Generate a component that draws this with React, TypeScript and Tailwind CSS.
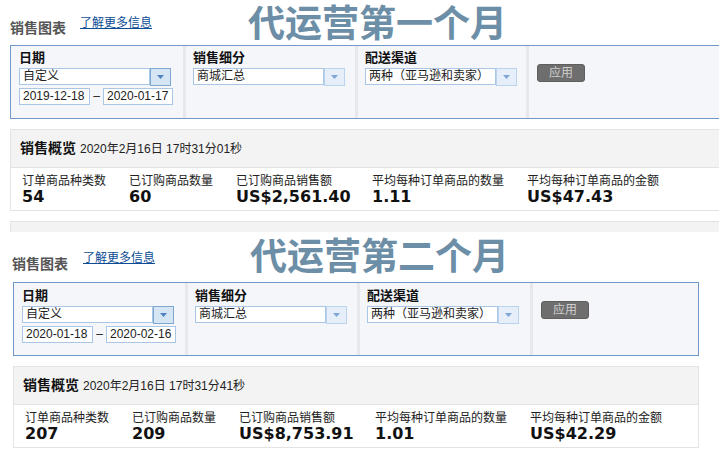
const sections = [
  {
    title: "代运营第一个月",
    from: "2019-12-18",
    to: "2020-01-17",
    time: "2020年2月16日 17时31分01秒",
    metrics: ["54", "60", "US$2,561.40", "1.11", "US$47.43"],
    wrap: "ml-[10px] w-[715px]",
    head: "h-[45px] pl-[10px]",
    headText: "mt-[21px] w-[70px]",
    link: "mt-[17px] w-[168px]",
    titleCls: "mt-[6px]",
    cols: ["w-[175px]", "w-[172px]", "w-[171px]"],
    colPad: "pt-[5px]",
    strip: true,
  },
  {
    title: "代运营第二个月",
    from: "2020-01-18",
    to: "2020-02-16",
    time: "2020年2月16日 17时31分41秒",
    metrics: ["207", "209", "US$8,753.91", "1.01", "US$42.29"],
    wrap: "ml-[13px] w-[686px]",
    head: "h-[50px] pl-[12px]",
    headText: "mt-[25px] w-[71px]",
    link: "mt-[20px] w-[167px]",
    titleCls: "mt-[7px]",
    cols: ["w-[174px]", "w-[172px]", "w-[173px]"],
    colPad: "pt-[6px]",
    strip: false,
  },
];

const labels = ["订单商品种类数", "已订购商品数量", "已订购商品销售额", "平均每种订单商品的数量", "平均每种订单商品的金额"];
const metricW = ["w-[107px]", "w-[107px]", "w-[136px]", "w-[155px]", "w-[150px]"];

const Arrow = ({ strong }: { strong?: boolean }) => (
  <div
    className={
      strong
        ? "w-[21px] h-[18px] bg-[#d6e5f4] border border-[#7ea7d4] flex items-center justify-center"
        : "w-[21px] h-[18px] bg-[#e5eef9] border border-[#bcd3ed] flex items-center justify-center"
    }
  >
    <svg width="7" height="4" viewBox="0 0 7 4">
      <path d="M0 0h7L3.5 4z" fill={strong ? "#4f82be" : "#7fa6d6"} />
    </svg>
  </div>
);

const Select = ({ text, strong }: { text: string; strong?: boolean }) => (
  <div className="flex items-start">
    <div className="w-[131px] h-[17px] bg-white border border-[#a9c6e6] text-[12px] leading-[15px] pl-[3px] text-[#222] whitespace-nowrap overflow-hidden [text-spacing-trim:space-all]">
      {text}
    </div>
    <Arrow strong={strong} />
  </div>
);

const Label = ({ children }: { children: string }) => (
  <p className="text-[13px] leading-[14px] font-bold text-[#111] mb-[3px]">{children}</p>
);

const Section = ({ s }: { s: (typeof sections)[number] }) => (
  <div>
    <div className={`flex items-start ${s.head}`}>
      <p className={`text-[14px] leading-none font-semibold text-[#555] ${s.headText}`}>销售图表</p>
      <p className={`text-[12px] leading-none text-[#0b4c94] underline ${s.link}`}>了解更多信息</p>
      <h1 className={`text-[37px] leading-none font-bold text-[#6c8ea6] ${s.titleCls}`}>{s.title}</h1>
    </div>

    <div className={s.wrap}>
      <div className="h-[74px] border border-[#7199c8] bg-[#f4f6fa] flex">
        <div className={`${s.cols[0]} border-r-[3px] border-[#e6e8ec] pl-[8px] ${s.colPad}`}>
          <Label>日期</Label>
          <Select text="自定义" strong />
          <div className="flex items-center mt-[2px] text-[12px] leading-[15px] text-[#222]">
            <div className="w-[71px] h-[17px] bg-white border border-[#a9c6e6] pl-[3px]">{s.from}</div>
            <span className="w-[13px] text-center">–</span>
            <div className="w-[70px] h-[17px] bg-white border border-[#a9c6e6] pl-[3px]">{s.to}</div>
          </div>
        </div>
        <div className={`${s.cols[1]} border-r-[3px] border-[#e6e8ec] pl-[7px] ${s.colPad}`}>
          <Label>销售细分</Label>
          <Select text="商城汇总" />
        </div>
        <div className={`${s.cols[2]} border-r-[3px] border-[#e6e8ec] pl-[7px] ${s.colPad}`}>
          <Label>配送渠道</Label>
          <Select text="两种（亚马逊和卖家）" />
        </div>
        <div className="pl-[8px] pt-[18px]">
          <div className="w-[48px] h-[18px] bg-[#6e6e6e] border border-[#5e5e5e] rounded-[3px] text-[12px] leading-[16px] text-[#cfcfcf] text-center">
            应用
          </div>
        </div>
      </div>

      <div className="mt-[10px] border border-[#e3e3e3]">
        <div className="h-[37px] bg-[#f3f3f3] flex items-center pl-[9px] gap-[4px]">
          <span className="text-[14px] font-bold text-[#111]">销售概览</span>
          <span className="text-[12px] text-[#222]">{s.time}</span>
        </div>
        <div className="h-[43px] bg-white border-t border-[#e3e3e3] flex pl-[11px] pt-[6px]">
          {labels.map((l, i) => (
            <div key={l} className={metricW[i]}>
              <p className="text-[12px] leading-[14px] text-[#222] whitespace-nowrap">{l}</p>
              <p className="font-['DejaVu_Sans',sans-serif] text-[16px] leading-[18px] font-bold text-[#111]">{s.metrics[i]}</p>
            </div>
          ))}
        </div>
      </div>

      {s.strip && <div className="mt-[10px] h-[11px] bg-[#f3f3f3] border-t border-l border-[#e3e3e3]" />}
    </div>
  </div>
);

export default function App() {
  return (
    <div className="w-[719px] h-[458px] overflow-hidden bg-white font-['Liberation_Sans','Noto_Sans_CJK_SC',sans-serif]">
      {sections.map((s) => (
        <Section key={s.title} s={s} />
      ))}
    </div>
  );
}
